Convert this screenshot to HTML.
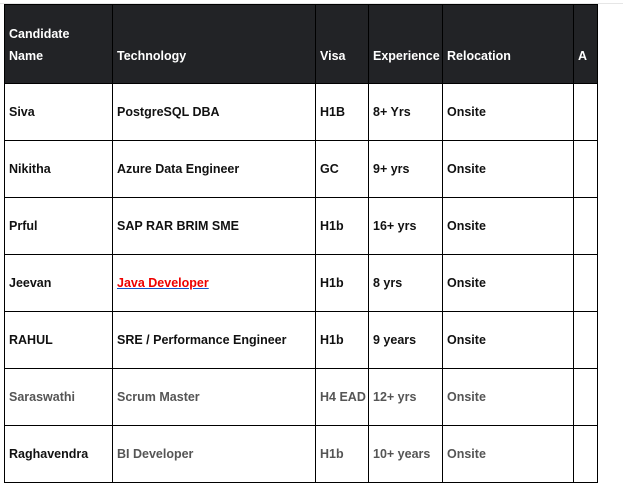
<!DOCTYPE html>
<html><head><meta charset="utf-8"><style>
html,body{margin:0;padding:0;background:#fff;width:623px;height:484px;overflow:hidden}
body{font-family:"Liberation Sans",sans-serif;font-size:12.5px;font-weight:bold;color:#111}
.topline{position:absolute;left:0;top:3px;width:623px;height:1px;background:#e6e6e6}
table{position:absolute;left:4px;top:4px;border-collapse:collapse;table-layout:fixed}
td{border:1px solid #000;padding:0 0 0 4px;height:56px;vertical-align:middle;white-space:nowrap;overflow:hidden;line-height:22px}
tr.h td{background:#222326;color:#fff;height:62px;vertical-align:bottom;padding-bottom:16px;border-color:#000}
.g{color:#555}
a{color:#e00;text-decoration:underline;text-decoration-color:#1155cc}
</style></head><body>
<div class="topline"></div>
<table>
<colgroup><col style="width:108px"><col style="width:203px"><col style="width:53px"><col style="width:74px"><col style="width:131px"><col style="width:24px"></colgroup>
<tr class="h"><td>Candidate<br>Name</td><td>Technology</td><td>Visa</td><td>Experience</td><td>Relocation</td><td>A</td></tr>
<tr><td>Siva</td><td>PostgreSQL DBA</td><td>H1B</td><td>8+ Yrs</td><td>Onsite</td><td></td></tr>
<tr><td>Nikitha</td><td>Azure Data Engineer</td><td>GC</td><td>9+ yrs</td><td>Onsite</td><td></td></tr>
<tr><td>Prful</td><td>SAP RAR BRIM SME</td><td>H1b</td><td>16+ yrs</td><td>Onsite</td><td></td></tr>
<tr><td>Jeevan</td><td><a>Java Developer</a></td><td>H1b</td><td>8 yrs</td><td>Onsite</td><td></td></tr>
<tr><td>RAHUL</td><td>SRE / Performance Engineer</td><td>H1b</td><td>9 years</td><td>Onsite</td><td></td></tr>
<tr class="g"><td>Saraswathi</td><td>Scrum Master</td><td>H4 EAD</td><td>12+ yrs</td><td>Onsite</td><td></td></tr>
<tr><td>Raghavendra</td><td class="g">BI Developer</td><td class="g">H1b</td><td class="g">10+ years</td><td class="g">Onsite</td><td></td></tr>
</table>
</body></html>
